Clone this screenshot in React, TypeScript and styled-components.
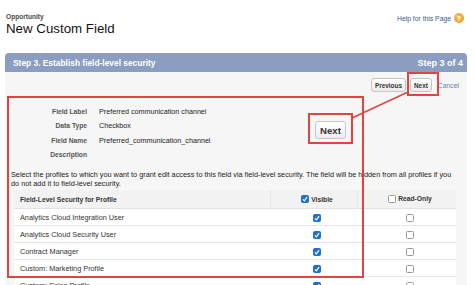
import styled, { createGlobalStyle } from 'styled-components';

const GlobalStyle = createGlobalStyle`
    html, body {
        margin: 0;
        padding: 0;
        background: #ffffff;
        overflow: hidden;
    }
    body {
        font-family: "Liberation Sans", Arial, sans-serif;
        color: #222;
    }
`;

const Page = styled.div`
    position: relative;
    width: 474px;
    height: 285px;
    overflow: hidden;
`;

const Header = styled.header`
    display: flex;
    justify-content: space-between;
    align-items: flex-start;
    padding: 13px 10px 0 6px;
    height: 40px;
`;

const TitleBlock = styled.div`
    display: flex;
    flex-direction: column;
`;

const Eyebrow = styled.span`
    font-size: 6.6px;
    font-weight: 700;
    color: #4a4a4a;
    line-height: 8px;
`;

const Title = styled.h1`
    margin: 0;
    font-size: 13.3px;
    font-weight: 400;
    line-height: 16px;
    color: #111;
`;

const HelpLink = styled.a`
    display: flex;
    align-items: center;
    gap: 3px;
    font-size: 6.8px;
    color: #3d5b8c;
    text-decoration: none;
`;

const HelpIcon = styled.span`
    display: inline-flex;
    align-items: center;
    justify-content: center;
    width: 10px;
    height: 10px;
    border-radius: 50%;
    background: radial-gradient(circle at 40% 35%, #f7c257, #e9931a);
    color: #fff;
    font-size: 7px;
    font-weight: 700;
`;

const Wizard = styled.section`
    margin: 0 7px 0 5px;
`;

const StepBar = styled.div`
    display: flex;
    justify-content: space-between;
    align-items: center;
    height: 19px;
    padding: 0 4px 0 8px;
    background: #8b9ec1;
    border-radius: 4px 4px 0 0;
    color: #fff;
    font-weight: 700;
`;

const StepText = styled.span<{ $size: number }>`
    font-size: ${(p) => p.$size}px;
`;

const Body = styled.div`
    background: #f6f6f6;
    padding: 6px 0 20px 0;
`;

const ButtonRow = styled.div`
    display: flex;
    justify-content: flex-end;
    align-items: center;
    gap: 4px;
    padding-right: 8px;
    height: 14px;
`;

const Button = styled.button`
    height: 14px;
    padding: 0 3px;
    border: 1px solid #c4c4c4;
    border-radius: 3px;
    background: linear-gradient(#ffffff, #ececec);
    font-family: inherit;
    font-size: 6.4px;
    font-weight: 700;
    color: #333;
`;

const CancelLink = styled.a`
    margin-left: 2px;
    font-size: 6.8px;
    color: #6c84a8;
`;

const FieldGrid = styled.dl`
    display: grid;
    grid-template-columns: 82px auto;
    column-gap: 12px;
    grid-auto-rows: 14.5px;
    align-items: center;
    margin: 12px 0 0 0;
`;

const FieldLabel = styled.dt`
    text-align: right;
    font-size: 6.7px;
    font-weight: 700;
    color: #555;
`;

const FieldValue = styled.dd`
    margin: 0;
    font-size: 7.2px;
    color: #222;
`;

const Intro = styled.p`
    margin: 8px 0 0 6px;
    font-size: 7.3px;
    line-height: 9px;
    color: #222;
    white-space: nowrap;
`;

const Table = styled.table`
    margin: 2px 0 0 9px;
    width: 442px;
    border-collapse: collapse;
    background: #fff;
`;

const HeadCell = styled.th<{ $align?: string; $width?: number }>`
    height: 18px;
    padding: 0 0 0 6px;
    background: #f2f2f2;
    border-bottom: 1px solid #e2e2e2;
    border-left: 1px solid #e6e6e6;
    text-align: ${(p) => p.$align || 'left'};
    width: ${(p) => (p.$width ? `${p.$width}px` : 'auto')};
    font-size: 6.7px;
    font-weight: 700;
    color: #333;
    &:first-child {
        border-left: none;
    }
`;

const HeadInner = styled.span`
    display: inline-flex;
    align-items: center;
    gap: 2px;
`;

const Cell = styled.td<{ $align?: string }>`
    height: 16px;
    padding: 0 0 0 6px;
    border-bottom: 1px solid #e6e6e6;
    text-align: ${(p) => p.$align || 'left'};
    font-size: 7.3px;
    color: #333;
`;

const Box = styled.span<{ $checked: boolean }>`
    display: inline-flex;
    align-items: center;
    justify-content: center;
    vertical-align: middle;
    width: 8px;
    height: 8px;
    box-sizing: border-box;
    border-radius: 1.5px;
    background: ${(p) => (p.$checked ? '#1e6fd6' : '#fff')};
    border: 1px solid ${(p) => (p.$checked ? '#1e6fd6' : '#9a9a9a')};
`;

const Overlay = styled.div`
    position: absolute;
    inset: 0;
    pointer-events: none;
`;

const RedBox = styled.div<{ $x: number; $y: number; $w: number; $h: number }>`
    position: absolute;
    left: ${(p) => p.$x}px;
    top: ${(p) => p.$y}px;
    width: ${(p) => p.$w}px;
    height: ${(p) => p.$h}px;
    box-sizing: border-box;
    border: 2px solid #e2433f;
`;

const BigNext = styled.div`
    position: absolute;
    left: 315px;
    top: 121px;
    width: 31px;
    height: 18px;
    box-sizing: border-box;
    display: flex;
    align-items: center;
    justify-content: center;
    border: 1px solid #c8c8c8;
    border-radius: 3px;
    background: linear-gradient(#ffffff, #ededed);
    font-size: 9.6px;
    font-weight: 700;
    color: #333;
`;

const Connector = styled.svg`
    position: absolute;
    left: 0;
    top: 0;
`;

const Check = ({ checked }: { checked: boolean }) => (
    <Box $checked={checked}>
        {checked && (
            <svg width="6" height="6" viewBox="0 0 10 10">
                <path d="M1.5 5.5 L4 8 L8.5 2" stroke="#fff" strokeWidth="2" fill="none" />
            </svg>
        )}
    </Box>
);

const profiles = [
    'Analytics Cloud Integration User',
    'Analytics Cloud Security User',
    'Contract Manager',
    'Custom: Marketing Profile',
    'Custom: Sales Profile',
];

const fields = [
    ['Field Label', 'Preferred communication channel'],
    ['Data Type', 'Checkbox'],
    ['Field Name', 'Preferred_communication_channel'],
    ['Description', ''],
];

const App = () => {
    return (
        <>
            <GlobalStyle />
            <Page>
                <Header>
                    <TitleBlock>
                        <Eyebrow>Opportunity</Eyebrow>
                        <Title>New Custom Field</Title>
                    </TitleBlock>
                    <HelpLink href="#">
                        Help for this Page
                        <HelpIcon>?</HelpIcon>
                    </HelpLink>
                </Header>
                <Wizard>
                    <StepBar>
                        <StepText $size={8.4}>Step 3. Establish field-level security</StepText>
                        <StepText $size={9}>Step 3 of 4</StepText>
                    </StepBar>
                    <Body>
                        <ButtonRow>
                            <Button>Previous</Button>
                            <Button>Next</Button>
                            <CancelLink>Cancel</CancelLink>
                        </ButtonRow>
                        <FieldGrid>
                            {fields.map(([label, value]) => (
                                <>
                                    <FieldLabel key={label}>{label}</FieldLabel>
                                    <FieldValue key={label + 'v'}>{value}</FieldValue>
                                </>
                            ))}
                        </FieldGrid>
                        <Intro>
                            Select the profiles to which you want to grant edit access to this field via field-level security. The field will be hidden from all profiles if you
                            <br />
                            do not add it to field-level security.
                        </Intro>
                        <Table>
                            <thead>
                                <tr>
                                    <HeadCell>Field-Level Security for Profile</HeadCell>
                                    <HeadCell $align="center" $width={80}>
                                        <HeadInner>
                                            <Check checked />
                                            Visible
                                        </HeadInner>
                                    </HeadCell>
                                    <HeadCell $align="center" $width={92}>
                                        <HeadInner>
                                            <Check checked={false} />
                                            Read-Only
                                        </HeadInner>
                                    </HeadCell>
                                </tr>
                            </thead>
                            <tbody>
                                {profiles.map((name) => (
                                    <tr key={name}>
                                        <Cell>{name}</Cell>
                                        <Cell $align="center">
                                            <Check checked />
                                        </Cell>
                                        <Cell $align="center">
                                            <Check checked={false} />
                                        </Cell>
                                    </tr>
                                ))}
                            </tbody>
                        </Table>
                    </Body>
                </Wizard>
                <Overlay>
                    <RedBox $x={7} $y={96} $w={357} $h={182} />
                    <RedBox $x={407} $y={72} $w={32} $h={24} />
                    <RedBox $x={308} $y={113} $w={45} $h={31} />
                    <BigNext>Next</BigNext>
                    <Connector width="474" height="285">
                        <line x1="352" y1="118" x2="408" y2="92" stroke="#e2433f" strokeWidth="1.5" />
                    </Connector>
                </Overlay>
            </Page>
        </>
    );
};

export default App;
